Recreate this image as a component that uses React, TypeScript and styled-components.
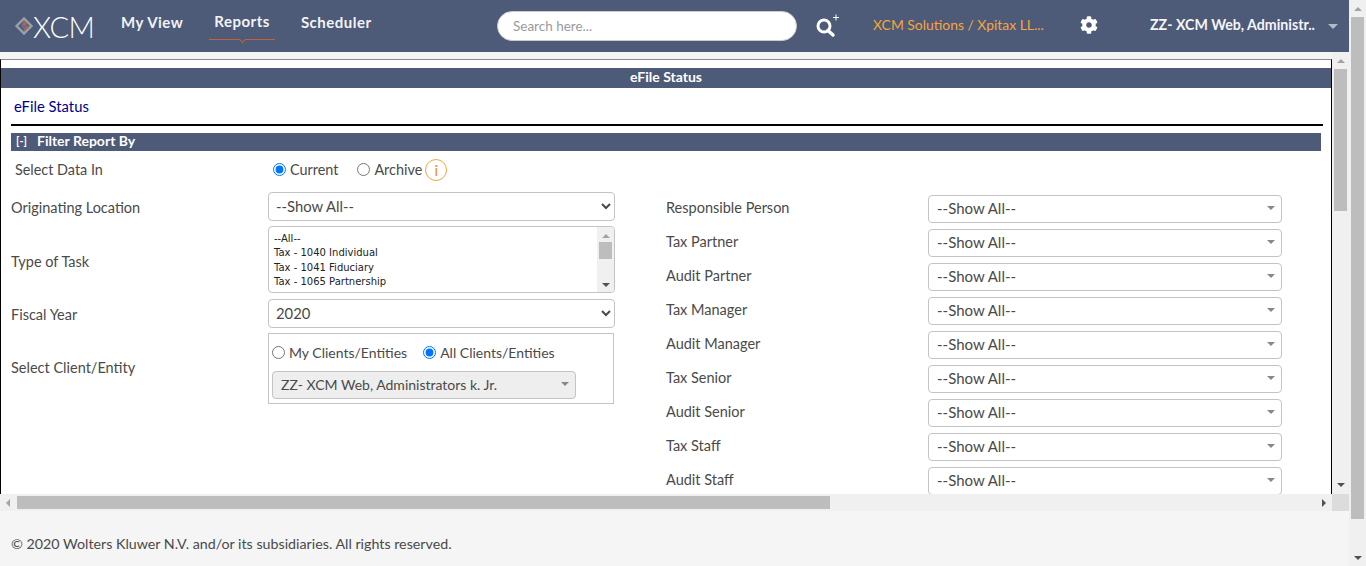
import React from 'react';
import styled, { createGlobalStyle } from 'styled-components';
import { FaCog } from 'react-icons/fa';

const uiFont = `Lato, 'Open Sans', Arial, sans-serif`;
const navy = '#4d5a78';

const roles = [
  'Responsible Person',
  'Tax Partner',
  'Audit Partner',
  'Tax Manager',
  'Audit Manager',
  'Tax Senior',
  'Audit Senior',
  'Tax Staff',
  'Audit Staff',
];

const tasks = [
  '--All--',
  'Tax - 1040 Individual',
  'Tax - 1041 Fiduciary',
  'Tax - 1065 Partnership',
  'Tax - 1120 Corporation',
];

const App = () => {
  return (
    <Page>
      <GlobalStyle />
      <Main>
        <Header>
          <Logo>
            <svg width="20" height="22" viewBox="1 1 24 24">
              <path d="M13 2 24 13 13 24 2 13Z" fill="#9a9fa8" />
              <path d="M13 6 20 13 13 20 6 13Z" fill="#4d5a78" />
              <path d="M13 7 16.5 10.5 13 14 10.5 11.5Z" fill="#c8623c" />
              <path d="M9 13 13 17 15 15 11 11Z" fill="#3f78b5" />
              <path d="M16 12 19 13 13 19 12.5 17.5Z" fill="#c8623c" />
            </svg>
            <LogoText>XCM</LogoText>
          </Logo>
          <Nav>
            <NavItem>My View</NavItem>
            <NavItem $active>Reports</NavItem>
            <NavItem>Scheduler</NavItem>
          </Nav>
          <SearchInput placeholder="Search here..." readOnly />
          <SearchIcon width="24" height="26" viewBox="0 0 24 26">
            <circle cx="9" cy="14" r="6" fill="none" stroke="#fff" strokeWidth="3" />
            <path d="M13 18.5 18 23" stroke="#fff" strokeWidth="3.4" strokeLinecap="round" />
            <path d="M18 5.500h6M21 2.500v6" stroke="#fff" strokeWidth="1" />
          </SearchIcon>
          <OrgName>XCM Solutions / Xpitax LL...</OrgName>
          <GearWrap>
            <FaCog size={18} color="#fff" />
          </GearWrap>
          <UserName>ZZ- XCM Web, Administr..</UserName>
          <Arrow $dir="down" $size={5} $color="#b4bac8" />
        </Header>

        <Workspace>
          <FrameColumn>
            <Document>
              <ReportBar>eFile Status</ReportBar>
              <ReportTitle>eFile Status</ReportTitle>
              <Rule />
              <FilterBar>
                <Toggle>[-]</Toggle>
                Filter Report By
              </FilterBar>
              <FilterGrid>
                <LeftColumn>
                  <DataInRow>
                    <DataInLabel>Select Data In</DataInLabel>
                    <RadioLabel $large>
                      <Radio name="data" defaultChecked />
                      Current
                    </RadioLabel>
                    <RadioLabel $large>
                      <Radio name="data" />
                      Archive
                    </RadioLabel>
                    <InfoBadge>i</InfoBadge>
                  </DataInRow>

                  <FieldRow>
                    <FieldLabel>Originating Location</FieldLabel>
                    <NativeSelect defaultValue="all">
                      <option value="all">--Show All--</option>
                    </NativeSelect>
                  </FieldRow>

                  <FieldRow>
                    <FieldLabel>Type of Task</FieldLabel>
                    <ListBox>
                      <ListItems>
                        {tasks.map((task) => (
                          <ListItem key={task}>{task}</ListItem>
                        ))}
                      </ListItems>
                      <ListScroll>
                        <Arrow $dir="up" $size={4} $color="#a3a3a3" />
                        <ListThumb />
                        <Arrow $dir="down" $size={4} $color="#505050" />
                      </ListScroll>
                    </ListBox>
                  </FieldRow>

                  <FieldRow>
                    <FieldLabel>Fiscal Year</FieldLabel>
                    <NativeSelect defaultValue="2020">
                      <option value="2020">2020</option>
                    </NativeSelect>
                  </FieldRow>

                  <FieldRow>
                    <FieldLabel $lift>Select Client/Entity</FieldLabel>
                    <ClientBox>
                      <ClientRadios>
                        <RadioLabel>
                          <Radio name="client" />
                          My Clients/Entities
                        </RadioLabel>
                        <RadioLabel>
                          <Radio name="client" defaultChecked />
                          All Clients/Entities
                        </RadioLabel>
                      </ClientRadios>
                      <DisabledSelect>
                        <span>ZZ- XCM Web, Administrators k. Jr.</span>
                        <Arrow $dir="down" $size={4} $color="#888" />
                      </DisabledSelect>
                    </ClientBox>
                  </FieldRow>
                </LeftColumn>

                <RightColumn>
                  {roles.map((role) => (
                    <RoleRow key={role}>
                      <RoleLabel>{role}</RoleLabel>
                      <RoleSelect>
                        <span>--Show All--</span>
                        <Arrow $dir="down" $size={4} $color="#888" />
                      </RoleSelect>
                    </RoleRow>
                  ))}
                </RightColumn>
              </FilterGrid>
            </Document>
            <VScroll>
              <Arrow $dir="up" $size={4} $color="#a3a3a3" />
              <FrameThumb />
              <Arrow $dir="down" $size={4} $color="#505050" />
            </VScroll>
          </FrameColumn>
          <HScrollRow>
            <HScroll>
              <Arrow $dir="left" $size={4} $color="#a3a3a3" />
              <HThumb />
              <Arrow $dir="right" $size={4} $color="#505050" />
            </HScroll>
            <Corner />
          </HScrollRow>
        </Workspace>

        <Footer>© 2020 Wolters Kluwer N.V. and/or its subsidiaries. All rights reserved.</Footer>
      </Main>

      <PageScroll>
        <Arrow $dir="up" $size={4} $color="#a3a3a3" />
        <PageThumb />
        <Arrow $dir="down" $size={4} $color="#505050" />
      </PageScroll>
    </Page>
  );
};

const GlobalStyle = createGlobalStyle`
  html, body {
    margin: 0;
    overflow: hidden;
    background: #f5f5f5;
  }
`;

const Page = styled.div`
  display: flex;
  width: 1366px;
  height: 566px;
  overflow: hidden;
  font-family: ${uiFont};
  color: #4a4a4a;
`;

const Main = styled.div`
  display: flex;
  flex-direction: column;
  width: 1349px;
`;

const Header = styled.header`
  display: flex;
  align-items: center;
  height: 52px;
  flex: none;
  background: ${navy};
  color: #fff;
`;

const Logo = styled.div`
  display: flex;
  align-items: center;
  width: 121px;
  padding-left: 14px;
  box-sizing: border-box;
`;

const LogoText = styled.span`
  font-size: 29px;
  font-weight: 300;
  letter-spacing: -0.6px;
  color: #fff;
  margin-left: -1px;
`;

const Nav = styled.nav`
  display: flex;
  width: 376px;
  gap: 31px;
  padding-bottom: 8px;
`;

const NavItem = styled.div<{ $active?: boolean }>`
  position: relative;
  font-size: 15px;
  font-weight: 700;
  letter-spacing: 0.5px;
  color: #f2f3f6;
  margin-top: ${(p) => (p.$active ? '-1px' : '0')};

  ${(p) =>
    p.$active &&
    `
    &::before {
      content: '';
      position: absolute;
      left: -5px;
      right: -5px;
      bottom: -9px;
      border-bottom: 1px solid #c0623f;
    }
    &::after {
      content: '';
      position: absolute;
      left: 50%;
      bottom: -11px;
      width: 4px;
      height: 4px;
      margin-left: -2px;
      border-right: 1px solid #c0623f;
      border-bottom: 1px solid #c0623f;
      background: ${navy};
      transform: rotate(45deg);
    }
  `}
`;

const SearchInput = styled.input`
  width: 300px;
  height: 30px;
  box-sizing: border-box;
  border: 1px solid #ccc;
  border-radius: 15px;
  padding: 0 15px;
  font-family: ${uiFont};
  font-size: 13.5px;
  background: #fff;
  outline: none;

  &::placeholder {
    color: #9b9b9b;
  }
`;

const SearchIcon = styled.svg`
  margin-left: 18px;
  margin-top: -3px;
  flex: none;
`;

const OrgName = styled.div`
  width: 172px;
  margin-left: 34px;
  padding-bottom: 4px;
  font-size: 13.9px;
  color: #f5a63c;
  white-space: nowrap;
`;

const GearWrap = styled.div`
  display: flex;
  margin-left: 35px;
  padding-bottom: 2px;
`;

const UserName = styled.div`
  width: 178px;
  margin-left: 52px;
  padding-bottom: 4px;
  font-size: 14.2px;
  font-weight: 700;
  color: #f4f5f7;
  white-space: nowrap;
`;

const Arrow = styled.span<{ $dir: 'up' | 'down' | 'left' | 'right'; $size: number; $color: string }>`
  display: block;
  flex: none;
  width: 0;
  height: 0;
  border-style: solid;
  border-color: transparent;
  border-width: ${(p) => p.$size}px;
  ${(p) => {
    const { $dir, $size, $color } = p;
    if ($dir === 'up') return `border-top-width: 0; border-bottom: ${$size}px solid ${$color};`;
    if ($dir === 'down') return `border-bottom-width: 0; border-top: ${$size}px solid ${$color};`;
    if ($dir === 'left') return `border-left-width: 0; border-right: ${$size}px solid ${$color};`;
    return `border-right-width: 0; border-left: ${$size}px solid ${$color};`;
  }}
`;

const Workspace = styled.div`
  display: flex;
  flex-direction: column;
  height: 459px;
  flex: none;
`;

const FrameColumn = styled.div`
  display: flex;
  height: 442px;
`;

const Document = styled.main`
  width: 1332px;
  margin-top: 7px;
  box-sizing: border-box;
  padding-top: 8px;
  overflow: hidden;
  background: #fff;
  border-top: 1px solid #8a8a8a;
  border-left: 1px solid #000;
  border-right: 1px solid #000;
`;

const ReportBar = styled.div`
  height: 20px;
  line-height: 18px;
  text-align: center;
  background: ${navy};
  color: #fff;
  font-size: 14px;
  font-weight: 700;
`;

const ReportTitle = styled.h2`
  margin: 0;
  height: 36px;
  padding-left: 13px;
  line-height: 36px;
  font-size: 14.8px;
  font-weight: 400;
  color: #00008b;
`;

const Rule = styled.div`
  height: 2px;
  margin: 0 8px 0 10px;
  background: #000;
`;

const FilterBar = styled.div`
  display: flex;
  align-items: center;
  height: 18px;
  margin: 7px 10px 0;
  padding-bottom: 3px;
  box-sizing: border-box;
  background: ${navy};
  color: #fff;
  font-size: 14px;
  font-weight: 700;
`;

const Toggle = styled.span`
  width: 26px;
  padding-left: 5px;
  box-sizing: border-box;
  font-size: 11px;
`;

const FilterGrid = styled.div`
  display: grid;
  grid-template-columns: 604px 616px;
  column-gap: 51px;
  padding-left: 10px;
`;

const LeftColumn = styled.div`
  display: flex;
  flex-direction: column;
  gap: 5px;
`;

const DataInRow = styled.div`
  display: flex;
  align-items: center;
  height: 22px;
  margin: 8px 0 6px;
`;

const DataInLabel = styled.span`
  width: 258px;
  padding: 0 0 2px 4px;
  box-sizing: border-box;
  font-size: 14.4px;
  margin-right: 4px;
`;

const RadioLabel = styled.label<{ $large?: boolean }>`
  display: flex;
  align-items: center;
  font-size: ${(p) => (p.$large ? '14.4px' : '14px')};
  margin-right: ${(p) => (p.$large ? '19px' : '16px')};
  padding-bottom: ${(p) => (p.$large ? '2px' : '2px')};
`;

const Radio = styled.input.attrs({ type: 'radio' })`
  width: 13px;
  height: 13px;
  margin: 0 4px 0 0;
`;

const InfoBadge = styled.span`
  display: flex;
  align-items: center;
  justify-content: center;
  width: 22px;
  height: 22px;
  margin-left: -16px;
  box-sizing: border-box;
  border: 1px solid #f5a63c;
  border-radius: 50%;
  color: #f08a1d;
  font-size: 15px;
`;

const FieldRow = styled.div`
  display: flex;
  align-items: center;
`;

const FieldLabel = styled.span<{ $lift?: boolean }>`
  width: 257px;
  flex: none;
  font-size: 14.5px;
  padding: ${(p) => (p.$lift ? '0 0 2px' : '2px 0 0')};
`;

const NativeSelect = styled.select`
  width: 347px;
  height: 29px;
  box-sizing: border-box;
  padding: 0 3px 2px;
  border: 1px solid #c4c4c4;
  border-radius: 4px;
  background: #fff;
  font-family: ${uiFont};
  font-size: 14.8px;
  color: #4a4a4a;
`;

const ListBox = styled.div`
  display: flex;
  width: 347px;
  height: 67px;
  margin-bottom: 1px;
  box-sizing: border-box;
  overflow: hidden;
  border: 1px solid #c4c4c4;
  border-radius: 4px;
`;

const ListItems = styled.div`
  flex: 1;
  padding: 4.500px 0 0 5px;
  font-family: 'DejaVu Sans', sans-serif;
  font-size: 10px;
  color: #222;
`;

const ListItem = styled.div`
  height: 14.500px;
  line-height: 14px;
  white-space: nowrap;
`;

const ListScroll = styled.div`
  display: flex;
  flex-direction: column;
  align-items: center;
  width: 17px;
  padding: 7px 0 5px;
  box-sizing: border-box;
  background: #f0f0f0;
`;

const ListThumb = styled.div`
  width: 13px;
  height: 17px;
  margin: 4px 0 auto;
  background: #bdbdbd;
`;

const ClientBox = styled.div`
  width: 346px;
  height: 71px;
  box-sizing: border-box;
  padding: 9px 3px 0;
  border: 1px solid #c4c4c4;
`;

const ClientRadios = styled.div`
  display: flex;
  height: 20px;
`;

const DisabledSelect = styled.div`
  display: flex;
  align-items: center;
  justify-content: space-between;
  width: 304px;
  height: 28px;
  margin-top: 8px;
  padding: 0 6px 0 8px;
  box-sizing: border-box;
  background: #eee;
  border: 1px solid #c4c4c4;
  border-radius: 4px;
  font-size: 14px;

  span {
    padding-bottom: 2px;
  }
`;

const RightColumn = styled.div`
  display: flex;
  flex-direction: column;
  gap: 6px;
  padding-top: 44px;
`;

const RoleRow = styled.div`
  display: flex;
  align-items: center;
`;

const RoleLabel = styled.span`
  width: 262px;
  flex: none;
  font-size: 14.5px;
  margin-top: -4px;
`;

const RoleSelect = styled.div`
  display: flex;
  align-items: center;
  justify-content: space-between;
  width: 354px;
  height: 28px;
  padding: 0 6px 0 8px;
  box-sizing: border-box;
  background: #fff;
  border: 1px solid #c4c4c4;
  border-radius: 4px;
  font-size: 15px;

  span {
    padding-bottom: 2px;
  }
`;

const VScroll = styled.div`
  display: flex;
  flex-direction: column;
  align-items: center;
  width: 17px;
  padding: 7px 0 7px;
  box-sizing: border-box;
  background: #f0f0f0;
`;

const FrameThumb = styled.div`
  width: 13px;
  height: 142px;
  margin: 6px 0 auto;
  background: #bdbdbd;
`;

const HScrollRow = styled.div`
  display: flex;
  height: 17px;
`;

const HScroll = styled.div`
  display: flex;
  align-items: center;
  width: 1332px;
  padding: 0 6px;
  box-sizing: border-box;
  background: #f0f0f0;
`;

const HThumb = styled.div`
  width: 813px;
  height: 13px;
  margin: 0 auto 0 7px;
  background: #bdbdbd;
`;

const Corner = styled.div`
  width: 17px;
  background: #dcdcdc;
`;

const Footer = styled.footer`
  flex: 1;
  display: flex;
  align-items: center;
  padding: 10px 0 0 11px;
  box-sizing: border-box;
  background: #f5f5f5;
  font-size: 14.25px;
`;

const PageScroll = styled.div`
  display: flex;
  flex-direction: column;
  align-items: center;
  width: 17px;
  padding: 7px 0 6px;
  box-sizing: border-box;
  background: #f0f0f0;
`;

const PageThumb = styled.div`
  width: 13px;
  height: 502px;
  margin: 6px 0 auto;
  background: #bdbdbd;
`;

export default App;
